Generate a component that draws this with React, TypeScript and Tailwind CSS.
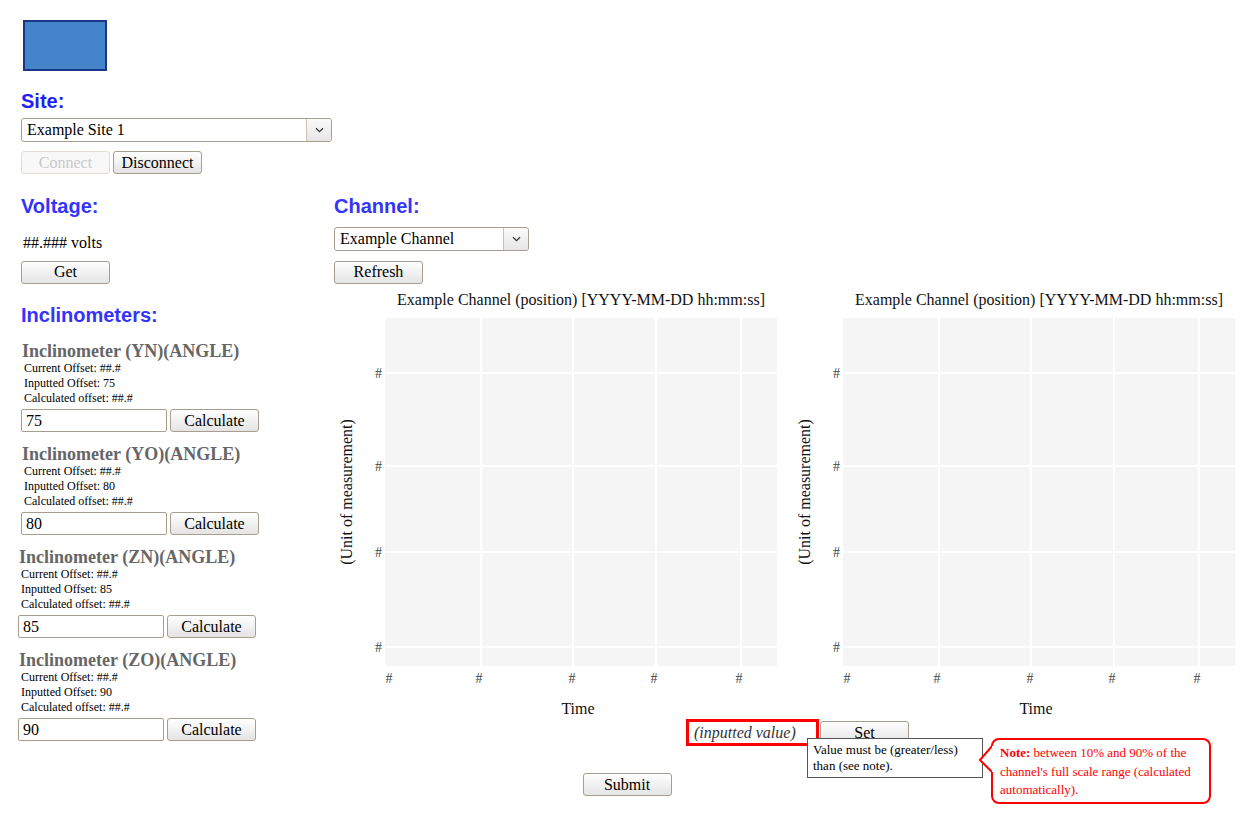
import React from 'react';

const serif = "font-['Liberation_Serif','Times_New_Roman',serif]";
const sans = "font-['Liberation_Sans',Arial,sans-serif]";

const Btn: React.FC<{ label: string; disabled?: boolean }> = ({ label, disabled }) => (
  <button
    disabled={disabled}
    className={`h-[23px] w-[89px] shrink-0 rounded-[3px] border text-[16px] leading-none ${serif} ${
      disabled
        ? 'border-[#e4ddd4] bg-[#f8f8f8] text-[#c9c9c9]'
        : 'border-[#a89e90] bg-linear-to-b from-white to-[#e4e4e4] text-black'
    }`}
  >
    {label}
  </button>
);

const Select: React.FC<{ value: string; width: string }> = ({ value, width }) => (
  <div className={`relative flex h-[24px] ${width} items-center rounded-[3px] border border-[#a89e90] bg-white`}>
    <span className={`pl-[5px] text-[16px] leading-none text-black ${serif}`}>{value}</span>
    <div className="ml-auto flex h-full w-[25px] items-center justify-center rounded-r-[3px] border-l border-[#c9c1b6] bg-linear-to-b from-[#fafafa] to-[#e6e6e6]">
      <svg width="9" height="6" viewBox="0 0 9 6">
        <path d="M1 1.2 L4.5 4.6 L8 1.2" fill="none" stroke="#333" strokeWidth="1.2" />
      </svg>
    </div>
  </div>
);

const Heading: React.FC<{ text: string; color?: string }> = ({ text, color = 'text-[#3434ff]' }) => (
  <h2 className={`h-[23px] text-[20px] font-bold leading-[23px] ${color} ${sans}`}>{text}</h2>
);

const Inclinometer: React.FC<{ code: string; value: string; shift?: boolean; first?: boolean }> = ({
  code,
  value,
  shift,
  first,
}) => (
  <div className={`${first ? 'mt-[14px]' : 'mt-[12px]'} ${shift ? 'ml-[-3px]' : ''}`}>
    <div className={`h-[20px] pl-[1px] text-[18px] font-bold leading-[20px] text-[#666] ${serif}`}>
      Inclinometer ({code})(ANGLE)
    </div>
    <div className={`pl-[3px] text-[12px] leading-[15px] text-black ${serif}`}>
      <div>Current Offset: ##.#</div>
      <div>Inputted Offset: {value}</div>
      <div>Calculated offset: ##.#</div>
    </div>
    <div className="mt-[3px] flex gap-[3px]">
      <div className={`flex h-[23px] w-[146px] items-center rounded-[2px] border border-[#a89e90] pl-[4px] text-[16px] leading-none ${serif}`}>
        {value}
      </div>
      <Btn label="Calculate" />
    </div>
  </div>
);

const Chart: React.FC = () => {
  const vx = [147, 239, 322, 407];
  const hy = [84, 177, 263, 358];
  const xl = [55, 145, 238, 320, 405];
  return (
    <svg width="458" height="428" className="block shrink-0" fontFamily="Liberation Serif, Times New Roman, serif">
      <text x="247" y="16" fontSize="16" textAnchor="middle" fill="#111">
        Example Channel (position) [YYYY-MM-DD hh:mm:ss]
      </text>
      <rect x="51" y="29" width="392" height="348" fill="#f5f5f5" />
      {vx.map((x) => (
        <line key={x} x1={x} y1="29" x2={x} y2="377" stroke="#fff" strokeWidth="2" />
      ))}
      {hy.map((y) => (
        <line key={y} x1="51" y1={y} x2="443" y2={y} stroke="#fff" strokeWidth="2" />
      ))}
      {hy.map((y) => (
        <text key={y} x="48" y={y + 5} fontSize="14" textAnchor="end" fill="#444">
          #
        </text>
      ))}
      {xl.map((x) => (
        <text key={x} x={x} y="394" fontSize="14" textAnchor="middle" fill="#444">
          #
        </text>
      ))}
      <text x="244" y="425" fontSize="16" textAnchor="middle" fill="#111">
        Time
      </text>
      <text transform="translate(18 203) rotate(-90)" fontSize="16" textAnchor="middle" fill="#111">
        (Unit of measurement)
      </text>
    </svg>
  );
};

export default function App() {
  return (
    <div className={`h-[840px] w-[1254px] overflow-hidden bg-white text-black ${serif}`}>
      <div className="pl-[21px] pt-[20px]">
        <div className="ml-[2px] h-[51px] w-[84px] border-2 border-[#1d3585] bg-[#4384cb]" />
        <div className="mt-[19px]">
          <Heading text="Site:" color="text-[#1e1eff]" />
        </div>
        <div className="mt-[5px]">
          <Select value="Example Site 1" width="w-[311px]" />
        </div>
        <div className="mt-[9px] flex gap-[3px]">
          <Btn label="Connect" disabled />
          <Btn label="Disconnect" />
        </div>

        <div className="mt-[21px] flex">
          <div className="w-[313px] shrink-0">
            <Heading text="Voltage:" />
            <div className="mt-[16px] h-[18px] pl-[2px] text-[16px] leading-[18px]">##.### volts</div>
            <div className="mt-[8px]">
              <Btn label="Get" />
            </div>
            <div className="mt-[20px]">
              <Heading text="Inclinometers:" />
            </div>
            <Inclinometer code="YN" value="75" first />
            <Inclinometer code="YO" value="80" />
            <Inclinometer code="ZN" value="85" shift />
            <Inclinometer code="ZO" value="90" shift />
          </div>

          <div className="flex-1">
            <Heading text="Channel:" />
            <div className="mt-[9px]">
              <Select value="Example Channel" width="w-[195px]" />
            </div>
            <div className="mt-[9px]">
              <Btn label="Refresh" />
            </div>
            <div className="mt-[5px] flex">
              <Chart />
              <Chart />
            </div>
            <div className="relative ml-[352px] mt-[2px] flex items-center gap-[1px]">
              <div className="flex h-[27px] w-[133px] items-center border-[3px] border-[#ff0000] pl-[5px] text-[16px] italic leading-none text-[#333]">
                (inputted value)
              </div>
              <Btn label="Set" />
              <div className="absolute left-[121px] top-[19px] w-[176px] border border-[#555] bg-white px-[5px] py-[3px] text-[13px] leading-[16px] text-black">
                Value must be (greater/less) than (see note).
              </div>
              <div className="absolute left-[305px] top-[19px] h-[66px] w-[220px] rounded-[8px] border-2 border-[#ff0000] bg-white px-[7px] pt-[4px] text-[13px] leading-[18.5px] text-[#ff0000]">
                <svg width="16" height="32" viewBox="0 0 16 32" className="absolute left-[-16px] top-[3px]">
                  <path d="M16 2 L3 17 L16 30" fill="white" stroke="#ff0000" strokeWidth="2" />
                  <rect x="15" y="3" width="3" height="26" fill="white" />
                </svg>
                <p>
                  <b>Note:</b> between 10% and 90% of the channel's full scale range (calculated automatically).
                </p>
              </div>
            </div>
          </div>
        </div>
      </div>
      <div className="mt-[27px] flex justify-center">
        <Btn label="Submit" />
      </div>
    </div>
  );
}
